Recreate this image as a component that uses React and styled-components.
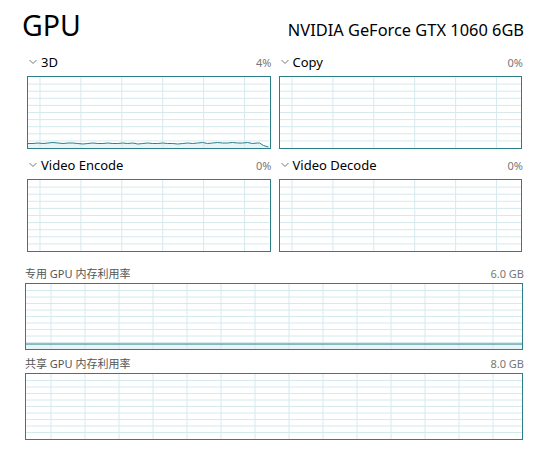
import React from 'react';
import styled, { createGlobalStyle } from 'styled-components';

const GlobalStyle = createGlobalStyle`
  body { margin: 0; background: #fff; }
  * { box-sizing: border-box; }
`;

const TEAL = '#2b7f89';
const GRID = '#d6e9ed';
const FONT = `"Segoe UI", "Noto Sans", "Noto Sans CJK SC", sans-serif`;

const Page = styled.div`
  width: 550px;
  height: 463px;
  padding: 6px 27px 0 25px;
  font-family: ${FONT};
  color: #000;
`;

const Header = styled.div`
  display: flex;
  align-items: baseline;
  justify-content: space-between;
  height: 45px;
`;

const Title = styled.h1`
  margin: 0 0 0 -3px;
  font-size: 28.5px;
  font-weight: 400;
  line-height: 38px;
`;

const Device = styled.div`
  font-size: 16.4px;
  line-height: 20px;
  margin-right: -1px;
`;

const EngineGrid = styled.div`
  display: grid;
  grid-template-columns: 1fr 1fr;
  column-gap: 8px;
  margin: 0 1px 6px 2px;
`;

const Engine = styled.div`
  display: flex;
  flex-direction: column;
  margin-bottom: 5px;
`;

const LabelRow = styled.div`
  display: flex;
  align-items: center;
  justify-content: space-between;
  height: ${p => p.$h}px;
  margin-bottom: ${p => p.$gap}px;
`;

const Name = styled.div`
  display: flex;
  align-items: center;
  gap: 4px;
  font-size: 13px;
`;

const Caption = styled.div`
  font-size: 11px;
  color: #555;
`;

const Value = styled.div`
  font-size: 11px;
  color: #777;
  margin-right: -1px;
`;

const Memory = styled.div`
  margin-bottom: 3px;
`;

const ChartBox = styled.div`
  height: ${p => p.$h}px;
  border: 1px solid ${TEAL};
  background: #fff;
  line-height: 0;
  svg { display: block; width: 100%; height: 100%; }
`;

const Chevron = () => (
  <svg width="8" height="6" viewBox="0 0 8 6" style={{ marginLeft: 2 }}>
    <polyline points="0.5,1 4,4.5 7.5,1" fill="none" stroke="#777" strokeWidth="1" />
  </svg>
);

function Chart({ width, height, h, offset, step, line }) {
  const vlines = [];
  for (let x = offset; x < width; x += step) vlines.push(x);
  const hlines = [];
  for (let i = 1; i < 10; i++) hlines.push((height * i) / 10);
  let area = null;
  let path = null;
  if (line) {
    const pts = line.map(([x, y]) => `${x},${y}`).join(' ');
    path = <polyline points={pts} fill="none" stroke={TEAL} strokeWidth="1" />;
    area = (
      <polygon
        points={`${line[0][0]},${height} ${pts} ${line[line.length - 1][0]},${height}`}
        fill="#e9f4f6"
      />
    );
  }
  return (
    <ChartBox $h={h}>
      <svg viewBox={`0 0 ${width} ${height}`} preserveAspectRatio="none">
        {area}
        {hlines.map(y => (
          <line key={'h' + y} x1="0" x2={width} y1={y} y2={y} stroke={GRID} strokeWidth="1" />
        ))}
        {vlines.map(x => (
          <line key={'v' + x} x1={x} x2={x} y1="0" y2={height} stroke={GRID} strokeWidth="1" />
        ))}
        {path}
      </svg>
    </ChartBox>
  );
}

// 3D usage trace, tiny values near the bottom
const trace3d = (() => {
  const ys = [66.5, 66.5, 66, 66.5, 66, 65.5, 66, 66.5, 66, 66, 66.5, 67, 66.5, 66, 66.5, 66.5, 66, 66.5,
    66.5, 66, 66.5, 66, 67, 66.5, 66, 66.5, 66.5, 66, 66.5, 66.5, 67, 66.5, 66, 66.5, 66, 65.5, 66.5, 66,
    65.5, 66, 66, 65.5, 66, 66, 65.5, 66.5, 66];
  const pts = ys.map((y, i) => [i * 5, y]);
  pts.push([232, 66], [236, 68.5], [241, 70]);
  return pts;
})();

const engines = [
  { name: '3D', value: '4%', line: trace3d },
  { name: 'Copy', value: '0%' },
  { name: 'Video Encode', value: '0%' },
  { name: 'Video Decode', value: '0%' },
];

const memory = [
  { name: '专用 GPU 内存利用率', value: '6.0 GB', line: [[0, 60], [496, 60]] },
  { name: '共享 GPU 内存利用率', value: '8.0 GB' },
];

export default function App() {
  return (
    <>
      <GlobalStyle />
      <Page>
        <Header>
          <Title>GPU</Title>
          <Device>NVIDIA GeForce GTX 1060 6GB</Device>
        </Header>
        <EngineGrid>
          {engines.map(e => (
            <Engine key={e.name}>
              <LabelRow $h={22} $gap={3}>
                <Name><Chevron />{e.name}</Name>
                <Value>{e.value}</Value>
              </LabelRow>
              <Chart width={242} height={71} h={73} offset={12} step={41} line={e.line} />
            </Engine>
          ))}
        </EngineGrid>
        {memory.map(m => (
          <Memory key={m.name}>
            <LabelRow $h={20} $gap={0}>
              <Caption>{m.name}</Caption>
              <Value>{m.value}</Value>
            </LabelRow>
            <Chart width={496} height={65} h={67} offset={25} step={34} line={m.line} />
          </Memory>
        ))}
      </Page>
    </>
  );
}
